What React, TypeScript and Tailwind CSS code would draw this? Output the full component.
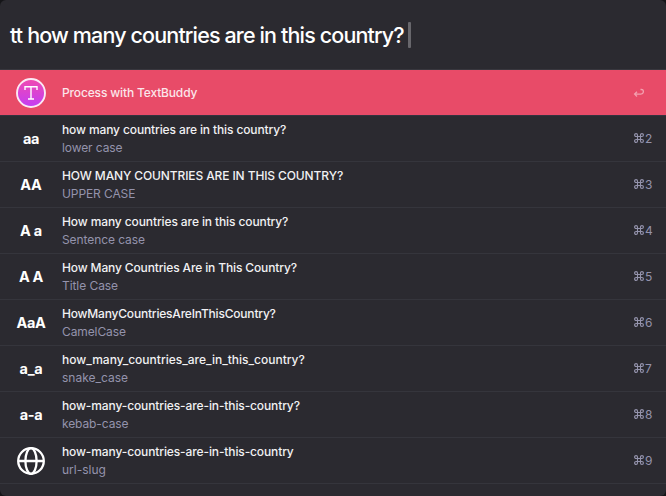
type Item = {
  glyph?: string;
  glyphClass?: string;
  title: string;
  titleClass: string;
  subtitle: string;
  subtitleClass: string;
  key: string;
};

const items: Item[] = [
  { glyph: 'aa', glyphClass: 'tracking-[-0.3px]', title: 'how many countries are in this country?', titleClass: 'tracking-[-0.12px]', subtitle: 'lower case', subtitleClass: 'tracking-[-0.1px]', key: '2' },
  { glyph: 'AA', glyphClass: 'tracking-[-0.3px]', title: 'HOW MANY COUNTRIES ARE IN THIS COUNTRY?', titleClass: 'tracking-[-0.115px]', subtitle: 'UPPER CASE', subtitleClass: 'tracking-[-0.1px]', key: '3' },
  { glyph: 'A a', glyphClass: 'tracking-[-0.3px]', title: 'How many countries are in this country?', titleClass: 'tracking-[-0.11px]', subtitle: 'Sentence case', subtitleClass: 'tracking-[-0.08px]', key: '4' },
  { glyph: 'A A', glyphClass: 'tracking-[-0.3px]', title: 'How Many Countries Are in This Country?', titleClass: 'tracking-[-0.135px]', subtitle: 'Title Case', subtitleClass: 'tracking-[-0.07px]', key: '5' },
  { glyph: 'AaA', glyphClass: 'tracking-[-0.3px]', title: 'HowManyCountriesAreInThisCountry?', titleClass: 'tracking-[-0.2px]', subtitle: 'CamelCase', subtitleClass: 'tracking-[-0.1px]', key: '6' },
  { glyph: 'a_a', glyphClass: 'tracking-[-0.3px]', title: 'how_many_countries_are_in_this_country?', titleClass: '', subtitle: 'snake_case', subtitleClass: '', key: '7' },
  { glyph: 'a-a', glyphClass: 'tracking-[-0.3px]', title: 'how-many-countries-are-in-this-country?', titleClass: 'tracking-[-0.12px]', subtitle: 'kebab-case', subtitleClass: 'tracking-[-0.1px]', key: '8' },
  { title: 'how-many-countries-are-in-this-country', titleClass: 'tracking-[-0.12px]', subtitle: 'url-slug', subtitleClass: '', key: '9' },
];

function Globe() {
  return (
    <svg width="28" height="28" viewBox="0 0 28 28" fill="none" stroke="#fff" strokeWidth="2.3">
      <circle cx="14" cy="14" r="12.8" />
      <ellipse cx="14" cy="14" rx="5.6" ry="12.8" />
      <path d="M1.3 14h25.4" />
    </svg>
  );
}

function Command() {
  return (
    <svg className="mb-px" width="10" height="10" viewBox="0 0 10 10" fill="none" stroke="currentColor" strokeWidth="1.15">
      <path d="M3.5 3.5V2.05A1.45 1.45 0 1 0 2.05 3.5H7.95A1.45 1.45 0 1 0 6.5 2.05V7.95A1.45 1.45 0 1 0 7.95 6.5H2.05A1.45 1.45 0 1 0 3.5 7.95Z" />
    </svg>
  );
}

function Row({ item }: { item: Item }) {
  return (
    <div className="flex h-[46px] shrink-0 items-center border-b border-[#35353c]">
      <div className="flex w-[62px] justify-center text-[14.5px] font-bold text-white">
        {item.glyph ? (
          <span className="pt-px">
            <span className={item.glyphClass}>{item.glyph}</span>
          </span>
        ) : (
          <Globe />
        )}
      </div>
      <div className="flex-1 whitespace-nowrap text-[12px] leading-[18px]">
        <div className="font-medium text-[#f1f1f3]">
          <span className={item.titleClass}>{item.title}</span>
        </div>
        <div className="text-[#9493ac]">
          <span className={item.subtitleClass}>{item.subtitle}</span>
        </div>
      </div>
      <div className="flex w-8 items-center text-[12px] leading-4 text-[#9493ac]">
        <Command />
        <span className="pl-px pt-px">{item.key}</span>
      </div>
    </div>
  );
}

export default function App() {
  return (
    <div className="h-[496px] w-[666px] bg-[#151518]">
      <div className="flex h-full w-full flex-col overflow-hidden rounded-[6px] bg-[#2b2a30] font-['Inter',sans-serif]">
        <div className="flex h-[70px] shrink-0 items-center border-b border-[#38373e] pl-[10px] pt-px">
          <span className="whitespace-nowrap pt-px text-[21.5px] font-medium tracking-[-0.86px] text-white">
            tt how many countries are in this country?
          </span>
          <span className="ml-[4px] h-[26px] w-[3px] rounded-[1px] bg-[#68676c]" />
        </div>
        <div className="flex h-[46px] shrink-0 items-center border-b border-[#34323f] bg-[#e84b68] bg-clip-padding">
          <div className="flex w-[62px] justify-center">
            <svg width="30" height="30" viewBox="0 0 30 30">
              <defs>
                <linearGradient id="badge" x1="0" y1="0" x2="0" y2="1">
                  <stop offset="0" stopColor="#f04ab0" />
                  <stop offset="1" stopColor="#c33df5" />
                </linearGradient>
              </defs>
              <circle cx="15" cy="15" r="14" fill="url(#badge)" stroke="#fbe9f5" strokeWidth="1.9" />
              <path d="M9 12V8.8H21V12M15 8.8V21M12 21H18" fill="none" stroke="#fff" strokeWidth="1.4" />
            </svg>
          </div>
          <div className="flex-1 text-[12px] font-medium tracking-[-0.15px] text-[#fbe6ea]">
            <span>Process with TextBuddy</span>
          </div>
          <div className="w-[33px] text-[#f2a0af]">
            <svg className="block" width="11" height="10" viewBox="0 0 11 10" fill="none" stroke="currentColor" strokeWidth="1.3">
              <path d="M7.5 1.5H8.4Q10.4 1.5 10.4 3.5Q10.4 6.1 7.8 6.1H1.8M4 3.7L1.6 6.1L4 8.5" />
            </svg>
          </div>
        </div>
        {items.map((item) => (
          <Row key={item.key} item={item} />
        ))}
      </div>
    </div>
  );
}
